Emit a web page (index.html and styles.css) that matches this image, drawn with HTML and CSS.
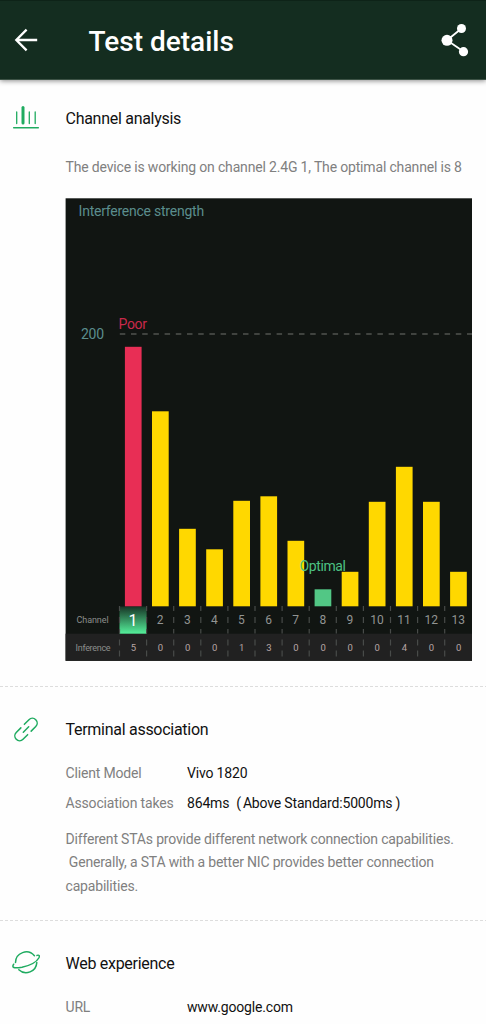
FILE: index.html
```html
<!DOCTYPE html>
<html lang="en">
  <head>
    <title>Test details</title>
    <meta charset="utf-8">
    <link rel="stylesheet" href="styles.css">
    <script src="chart.js"></script>
  </head>

  <body onload="drawChart()">
    <header class="topbar">
      <svg class="back" width="24" height="24" viewBox="0 0 24 24">
        <path d="M12.600 1.600L2.300 12l10.300 10.400M2.600 12h20.600"/>
      </svg>
      <h1>Test details</h1>
      <svg class="share" width="28" height="34" viewBox="0 0 28 34">
        <path d="M20.500 5.500L6 17.300l16.500 11.200"/>
        <circle cx="20.500" cy="5.500" r="4.500"/>
        <circle cx="6" cy="17.300" r="5.500"/>
        <circle cx="22.500" cy="28.700" r="4.600"/>
      </svg>
    </header>

    <section class="channel">
      <svg class="icon" width="28" height="28" viewBox="0 0 28 28">
        <path d="M4.700 8v11.600M17.300 8v11.600M23.200 8v11.600" stroke-width="1.300"/>
        <path d="M11 3.500v15.400" stroke-width="3"/>
        <path d="M1.700 23.700h24.600" stroke-width="1.500"/>
      </svg>
      <div class="content">
        <h2>Channel analysis</h2>
        <p class="summary">The device is working on channel 2.4G 1, The optimal channel is 8</p>
        <svg id="chart" width="407" height="463" viewBox="0 0 407 463"></svg>
      </div>
    </section>

    <section class="terminal">
      <svg class="icon" width="28" height="28" viewBox="0 0 28 28">
        <g transform="rotate(-45 14 13.500)" stroke-width="1.500">
          <path d="M11.500 18.300H5a4.800 4.800 0 0 1 0-9.600H11.500"/>
          <path d="M16.500 8.700H23a4.800 4.800 0 0 1 0 9.600H16.500"/>
          <path d="M10.200 13.500h7.600"/>
        </g>
      </svg>
      <div class="content">
        <h2>Terminal association</h2>
        <dl>
          <dt>Client Model</dt><dd>Vivo 1820</dd>
          <dt>Association takes</dt><dd>864ms<span class="open">(</span>Above Standard:5000ms<span class="close">)</span></dd>
        </dl>
        <p class="note">Different STAs provide different network connection capabilities.<br>&nbsp;Generally, a STA with a better NIC provides better connection<br>capabilities.</p>
      </div>
    </section>

    <section class="web">
      <svg class="icon" width="28" height="28" viewBox="0 0 28 28">
        <g stroke-width="1.500">
          <path d="M3.500 12.600A10.700 10.700 0 0 1 22.400 5.800"/>
          <path d="M24.800 12.600A10.700 10.700 0 0 1 6.800 19.700"/>
          <path d="M1.700 14.200C-.5 17.600 1.500 18.600 10 17.300 18 15.500 24.500 12 26.800 8 28 5.800 27.200 4.600 25 5.400"/>
        </g>
      </svg>
      <div class="content">
        <h2>Web experience</h2>
        <dl>
          <dt>URL</dt><dd>www.google.com</dd>
        </dl>
      </div>
    </section>
  </body>
</html>
```
FILE: styles.css
```css
body{
  margin: 0;
  background-color: #fefefe;
  font-family: Roboto, sans-serif;
  color: #111;
}
h1, h2, p, dl, dd{
  margin: 0;
  font-weight: normal;
  white-space: nowrap;
}
svg{
  display: block;
}
.topbar{
  display: flex;
  align-items: center;
  box-sizing: border-box;
  height: 80px;
  padding: 4px 17px 0 14px;
  background-color: #142d20;
  border-top: 1px solid #0e2318;
  border-bottom: 1px solid #3c5245;
  box-shadow: 0 1px 5px rgba(0, 0, 0, 0.45);
  color: #fff;
}
.topbar h1{
  flex: 1;
  margin-left: 50.5px;
  font-size: 28px;
  font-weight: 500;
  line-height: 40px;
}
.back{
  margin-bottom: 4px;
  fill: none;
  stroke: #fff;
  stroke-width: 2.3;
}
.share{
  margin-bottom: 4px;
  fill: #fff;
  stroke: #fff;
}
.share path{
  fill: none;
  stroke-width: 1.8;
}
.share circle{
  stroke: none;
}
section{
  display: grid;
  grid-template-columns: 53.5px 1fr;
  box-sizing: border-box;
  padding-left: 12px;
}
.icon{
  fill: none;
  stroke: #1fab60;
  stroke-linecap: round;
}
.channel{
  padding-top: 24px;
  height: 606px;
}
.terminal, .web{
  padding-top: 30px;
  background: repeating-linear-gradient(90deg, #ddd 0 3px, transparent 3px 5px) 0 0 / 100% 1px no-repeat;
}
.terminal{
  height: 234px;
}
.web{
  height: 104px;
}
h2{
  font-size: 16px;
  line-height: 28px;
  letter-spacing: -0.28px;
}
.channel h2{
  line-height: 29px;
}
.summary{
  margin-top: 20px;
  font-size: 14px;
  line-height: 28px;
  letter-spacing: -0.17px;
  color: #808080;
}
#chart{
  margin: 17px 0 0 -0.5px;
}
dl{
  display: grid;
  grid-template-columns: 121.5px 1fr;
  margin-top: 14px;
  font-size: 14px;
  line-height: 30px;
  letter-spacing: -0.17px;
}
dt{
  color: #808080;
}
.open{
  margin: 0 2px 0 7px;
}
.close{
  margin-left: 3px;
}
.note{
  margin-top: 10px;
  font-size: 14px;
  line-height: 23.4px;
  letter-spacing: -0.18px;
  color: #808080;
}

/* chart */
.bg{ fill: #111512; }
.footer{ fill: #212121; }
.teal{ fill: #5b8d8d; font-size: 14px; }
.bar{ fill: #ffd800; }
.bar.poor{ fill: #e82e55; }
.bar.optimal{ fill: #52c785; }
.limit{ stroke: #50534f; stroke-width: 1.5; stroke-dasharray: 5.5 5.7; }
.divider{ stroke: #484b49; stroke-width: 1.2; }
.number{ fill: #929492; font-size: 12px; }
.number.current{ fill: #fff; font-size: 16px; }
.value{ fill: #b7a5a5; font-size: 9.5px; }
.caption{ fill: #8c8e8c; font-size: 9px; }
.poor-text{ fill: #c9294b; font-size: 14px; }
.optimal-text{ fill: #4cc182; font-size: 14px; }
.middle{ text-anchor: middle; }
```
FILE: chart.js
```js
var heights = [259.5, 195, 77.5, 57, 105.5, 110, 65.5, 17, 34.5, 104.5, 139.5, 104.5, 34.5];
var inference = [5, 0, 0, 0, 1, 3, 0, 0, 0, 0, 4, 0, 0];

function drawChart(){
  var left = 54.5;   // start of the first channel
  var step = 27.1;
  var base = 408.3;  // bottom of the bars
  var html = '<defs><linearGradient id="glow" x1="0" y1="0" x2="0" y2="1">' +
    '<stop offset="0" stop-color="#173425"/><stop offset="1" stop-color="#55f09b"/>' +
    '</linearGradient></defs>';

  html += '<rect class="bg" x="0.6" y="0.3" width="406.4" height="462.5"/>';
  html += '<rect class="footer" x="0.6" y="435.7" width="406.4" height="27.1"/>';
  html += '<rect fill="url(#glow)" x="54.5" y="408.5" width="27.1" height="27.2"/>';
  html += '<text class="teal" x="13.600" y="17.500" textLength="125.500">Interference strength</text>';
  html += '<text class="teal" x="16" y="141" textLength="23">200</text>';
  html += '<path class="limit" d="M54.800 136H407"/>';

  for (var i = 0; i < heights.length; i++){
    var x = left + i * step;
    var center = x + step / 2;
    var type = i === 0 ? " poor" : i === 7 ? " optimal" : "";

    html += '<rect class="bar' + type + '" x="' + (x + 5.4) + '" y="' + (base - heights[i]) +
      '" width="16.7" height="' + heights[i] + '"/>';
    html += '<path class="divider" d="M' + x + ' 408v5m0 6v6m0 6v4.500m0 6v6m0 5v6"/>';
    html += '<text class="middle number' + (i === 0 ? " current" : "") + '" x="' + center +
      '" y="' + (i === 0 ? 428 : 426.3) + '">' + (i + 1) + '</text>';
    html += '<text class="middle value" x="' + (center + 0.3) + '" y="452.800">' + inference[i] + '</text>';
  }

  html += '<text class="caption" x="11.600" y="425.300" textLength="32">Channel</text>';
  html += '<text class="caption" x="10.600" y="452.500" textLength="35">Inference</text>';
  html += '<text class="poor-text" x="53.500" y="131" textLength="28.500">Poor</text>';
  html += '<text class="optimal-text" x="234.500" y="373" textLength="46.500">Optimal</text>';
  document.getElementById("chart").innerHTML = html;
}
```
